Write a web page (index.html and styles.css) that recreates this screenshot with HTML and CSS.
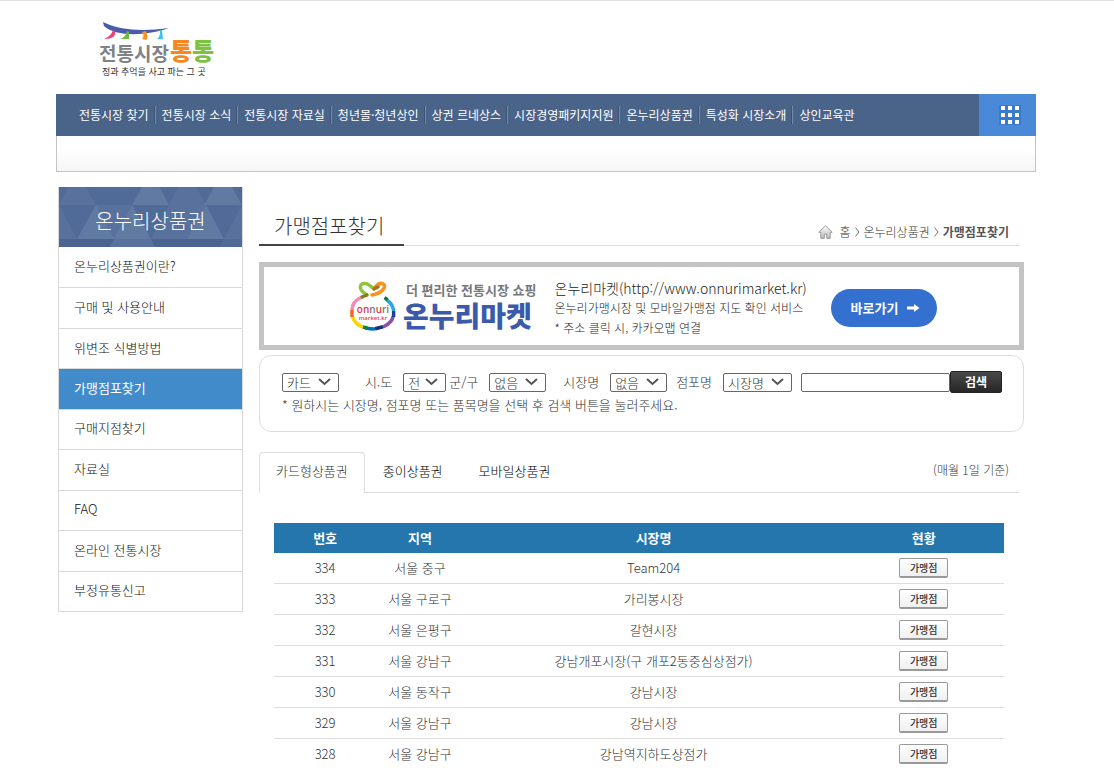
FILE: index.html
```html
<!DOCTYPE html>
<html lang="ko">
<head>
<meta charset="utf-8">
<title>가맹점포찾기 - 전통시장 통통</title>
<link rel="stylesheet" href="styles.css">
</head>
<body>
<div class="page">
  <header class="header">
    <a class="logo" href="#" aria-label="전통시장 통통">
      <svg width="124" height="62" viewBox="0 0 124 62">
        <path d="M7 2C22 10 46 12 73 8C50 16 20 17 8 6Z" fill="#4a5bab"/>
        <path d="M17 10l2 1c1 5-2 8-11 8c5-2 8-5 9-9z" fill="#ef3e7b"/>
        <path d="M31 11l2 1l0 7h-9c4-1 6-4 7-8z" fill="#6cbb45"/>
        <path d="M46 12l4-1c1 4 3 6 0 9l-4-1c2-2 2-4 0-7z" fill="#f7941e"/>
        <path d="M64 10l2 0l1 9h-6c3-2 3-5 3-9z" fill="#3ec1ee"/>
        <text class="logo-gray" x="3" y="41">전통시장</text>
        <text class="logo-big" x="74" y="40" fill="#f7881f">통</text>
        <text class="logo-big" x="96" y="40" fill="#7ec242">통</text>
        <text class="logo-tag" x="6" y="55">정과 추억을 사고 파는 그 곳</text>
      </svg>
    </a>
  </header>

  <nav class="gnb" aria-label="주 메뉴">
    <ul class="gnb-list">
      <li><a href="#">전통시장 찾기</a></li>
      <li><a href="#">전통시장 소식</a></li>
      <li><a href="#">전통시장 자료실</a></li>
      <li><a href="#">청년몰·청년상인</a></li>
      <li><a href="#">상권 르네상스</a></li>
      <li><a href="#">시장경영패키지지원</a></li>
      <li><a href="#">온누리상품권</a></li>
      <li><a href="#">특성화 시장소개</a></li>
      <li><a href="#">상인교육관</a></li>
    </ul>
    <button class="gnb-all" type="button" aria-label="전체메뉴">
      <svg width="22" height="20" viewBox="0 0 22 20">
        <rect width="22" height="20" fill="#3a7acc"/>
        <path fill="#fff" d="M2 1h4v4h-4zM9 1h4v4h-4zM16 1h4v4h-4zM2 8h4v4h-4zM9 8h4v4h-4zM16 8h4v4h-4zM2 15h4v4h-4zM9 15h4v4h-4zM16 15h4v4h-4z"/>
      </svg>
    </button>
  </nav>
  <div class="subbar"></div>

  <div class="body">
    <aside class="side">
      <h2 class="side-title">온누리상품권</h2>
      <ul class="side-list">
        <li><a href="#">온누리상품권이란?</a></li>
        <li><a href="#">구매 및 사용안내</a></li>
        <li><a href="#">위변조 식별방법</a></li>
        <li class="on"><a href="#">가맹점포찾기</a></li>
        <li><a href="#">구매지점찾기</a></li>
        <li><a href="#">자료실</a></li>
        <li><a href="#">FAQ</a></li>
        <li><a href="#">온라인 전통시장</a></li>
        <li><a href="#">부정유통신고</a></li>
      </ul>
    </aside>

    <main class="main">
      <div class="title-row">
        <h1 class="title">가맹점포찾기</h1>
        <div class="crumb">
          <svg width="15" height="14" viewBox="0 0 15 14">
            <defs><linearGradient id="roof" x1="0" y1="0" x2="0" y2="1"><stop offset="0" stop-color="#fff"/><stop offset="1" stop-color="#bbb"/></linearGradient></defs>
            <path d="M7.500 .7L.8 7.300h2V13.300h3.500V9h2.400v4.300h3.500V7.300h2z" fill="url(#roof)" stroke="#999"/>
          </svg>
          <a href="#">홈</a>
          <svg width="5" height="10" viewBox="0 0 5 10"><path d="M.5.5l3.500 4.500l-3.500 4.500" fill="none" stroke="#777"/></svg>
          <a href="#">온누리상품권</a>
          <svg width="5" height="10" viewBox="0 0 5 10"><path d="M.5.5l3.500 4.500l-3.500 4.500" fill="none" stroke="#777"/></svg>
          <strong>가맹점포찾기</strong>
        </div>
      </div>

      <section class="banner">
        <svg class="banner-mark" width="46" height="50" viewBox="0 0 46 50">
          <g fill="none" stroke-width="3.500" stroke-linecap="round">
            <path d="M17 14C8 9 9 2 15 2.500c4 0 6 4 9 5" stroke="#8cc63f"/>
            <path d="M22 14C33 12 38 4 32 2.500c-4-1-6 3-8 5" stroke="#f7941e"/>
            <path d="M24 8l4-2" stroke="#a0781a"/>
            <path d="M12 16C5 19 2 24 2 29" stroke="#f08cb8"/>
            <path d="M37 19C41 22 43 26 43.500 29" stroke="#29a8df"/>
            <path d="M2.500 36C5 42 9 45 13 46" stroke="#ffd400"/>
            <path d="M43 36C42 40 39 43 34 45.500" stroke="#8e4fa8"/>
            <path d="M16 47C20 48 22 48 24 48" stroke="#0071bc"/>
          </g>
          <g fill="none" stroke-width="3.500">
            <path d="M2 29v7" stroke="#ee6a1f"/>
            <path d="M43.600 30v6" stroke="#1d3f94"/>
            <path d="M13 46l4 1" stroke="#118043"/>
            <path d="M34.500 16.600l3 2" stroke="#14703a"/>
            <path d="M11 16.500l7-3" stroke="#8a7a20"/>
            <path d="M25 47.700l8-2" stroke="#14317d"/>
          </g>
          <text class="mark-a" x="23" y="32" text-anchor="middle"><tspan fill="#e23b4a">on</tspan><tspan fill="#777">n</tspan><tspan fill="#e23b4a">u</tspan><tspan fill="#777">ri</tspan></text>
          <text class="mark-b" x="23" y="39" text-anchor="middle">market.kr</text>
        </svg>
        <div class="banner-name">
          <span class="banner-sub">더 편리한 전통시장 쇼핑</span>
          <strong class="banner-big">온누리마켓</strong>
        </div>
        <div class="banner-text">
          <p class="lead">온누리마켓(http://www.onnurimarket.kr)</p>
          <p>온누리가맹시장 및 모바일가맹점 지도 확인 서비스</p>
          <p>* 주소 클릭 시, 카카오맵 연결</p>
        </div>
        <a class="go" href="#">바로가기
          <svg width="13" height="8" viewBox="0 0 13 8"><path d="M0 2.500h7V0l5.500 4L7 8V5.500H0z" fill="#fff"/></svg>
        </a>
      </section>

      <form class="search">
        <div class="search-row">
          <select class="w57" aria-label="상품권 종류"><option>카드</option></select>
          <label class="wide" for="sido">시.도</label>
          <select class="w43" id="sido"><option>전</option></select>
          <label class="tight" for="gugun">군/구</label>
          <select class="w57" id="gugun"><option>없음</option></select>
          <label class="mid" for="market">시장명</label>
          <select class="w57" id="market"><option>없음</option></select>
          <label class="near" for="kind">점포명</label>
          <select class="w69" id="kind"><option>시장명</option></select>
          <input class="keyword" type="text" aria-label="검색어">
          <button class="search-btn" type="button">검색</button>
        </div>
        <p class="search-help">* 원하시는 시장명, 점포명 또는 품목명을 선택 후 검색 버튼을 눌러주세요.</p>
      </form>

      <div class="tabs">
        <a class="tab active" href="#">카드형상품권</a>
        <a class="tab" href="#">종이상품권</a>
        <a class="tab" href="#">모바일상품권</a>
        <span class="tabs-note">(매월 1일 기준)</span>
      </div>

      <table class="list">
        <colgroup><col class="c-no"><col class="c-area"><col class="c-name"><col class="c-state"></colgroup>
        <thead><tr><th>번호</th><th>지역</th><th>시장명</th><th>현황</th></tr></thead>
        <tbody>
          <tr><td>334</td><td>서울 중구</td><td>Team204</td><td><button type="button">가맹점</button></td></tr>
          <tr><td>333</td><td>서울 구로구</td><td>가리봉시장</td><td><button type="button">가맹점</button></td></tr>
          <tr><td>332</td><td>서울 은평구</td><td>갈현시장</td><td><button type="button">가맹점</button></td></tr>
          <tr><td>331</td><td>서울 강남구</td><td>강남개포시장(구 개포2동중심상점가)</td><td><button type="button">가맹점</button></td></tr>
          <tr><td>330</td><td>서울 동작구</td><td>강남시장</td><td><button type="button">가맹점</button></td></tr>
          <tr><td>329</td><td>서울 강남구</td><td>강남시장</td><td><button type="button">가맹점</button></td></tr>
          <tr><td>328</td><td>서울 강남구</td><td>강남역지하도상점가</td><td><button type="button">가맹점</button></td></tr>
        </tbody>
      </table>
    </main>
  </div>
</div>
</body>
</html>
```
FILE: styles.css
```css
* { box-sizing: border-box; }
body, h1, h2, p, ul { margin: 0; padding: 0; }
ul { list-style: none; }
body, select, input, button {
  font-family: "Noto Sans CJK KR", "Noto Sans", sans-serif;
  font-size: 13px;
  font-weight: 300;
  color: #333;
}
body { background: #fff; border-top: 1px solid #e0e0e0; line-height: 20px; }
a { color: inherit; text-decoration: none; }
svg { display: block; flex: none; }

.page { padding: 0 78px 0 56px; }
.header { padding: 19px 0 12px 40px; }
.logo { display: inline-block; vertical-align: top; }
.logo-gray { font-size: 19px; font-weight: 700; fill: #808285; }
.logo-big { font-size: 24px; font-weight: 900; }
.logo-tag { font-size: 9px; font-weight: 400; fill: #333; }

.gnb { display: flex; background: #4a6388; }
.gnb-list { display: flex; flex: 1; align-items: center; padding-left: 17px; }
.gnb-list li { padding: 0 6px; line-height: 18px; font-size: 12px; font-weight: 400; color: #fff; white-space: nowrap; }
.gnb-list li + li { border-left: 1px solid #7189ab; box-shadow: -1px 0 #3c5272; }
.gnb-all { display: flex; align-items: center; justify-content: center; width: 57px; height: 42px; padding: 0 0 0 5px; border: 0; background: #4a89d8; }
.subbar { height: 36px; border: 1px solid #c4c4c4; border-top: 0; background: linear-gradient(#fff 35%, #f6f6f6); }

.body { display: flex; align-items: flex-start; gap: 16px; padding: 15px 12px 0 2px; }
.side { flex: none; width: 185px; border: 1px solid #d9d9d9; border-top: 0; }
.side-title {
  line-height: 60px; padding-top: 4px; height: 60px; text-align: center; font-size: 20px; font-weight: 300; color: #fff;
  background: #506b98 url("data:image/svg+xml,%3Csvg xmlns='http://www.w3.org/2000/svg' width='183' height='60'%3E%3Cg fill='%23fff'%3E%3Cpath opacity='.1' d='M18 52L37 18L55 52zM73 18L92 52L55 52zM128 52L147 18L165 52zM73 18L92 -16L110 18zM145 18L164 -16L183 18z'/%3E%3Cpath opacity='.05' d='M37 18L73 18L55 52zM92 52L110 18L128 52zM110 18L147 18L128 52zM0 18L18 -16L37 18zM0 18L18 52L0 52zM110 18L128 -16L147 18zM165 52L183 18L183 52zM55 52L92 52L110 86L37 86z'/%3E%3C/g%3E%3Cpath opacity='.06' d='M0 52L55 52L37 86L0 86zM92 52L165 52L147 86L110 86z'/%3E%3C/svg%3E");
}
.side-list { display: grid; grid-auto-rows: 1fr; min-height: 364px; }
.side-list li { display: flex; align-items: center; padding: 0 0 2px 15px; color: #111; }
.side-list li + li { border-top: 1px solid #d9d9d9; }
.side-list .on { background: #428bca; color: #fff; font-weight: 400; }

.main { flex: 1; min-width: 0; }
.title-row { display: flex; justify-content: space-between; align-items: flex-end; margin-right: 5px; border-bottom: 1px solid #ddd; }
.title { padding: 24px 20px 3px 15px; margin-bottom: -1px; border-bottom: 2px solid #444; line-height: 30px; font-size: 20px; font-weight: 300; }
.crumb { display: flex; align-items: center; gap: 4px; padding: 0 10px 3px 0; font-size: 12px; }
.crumb svg:first-child { margin-right: 2px; }
.crumb strong { font-weight: 700; color: #555; }

.banner { display: flex; align-items: center; margin-top: 16px; height: 88px; padding-left: 86px; border: 5px solid #c4c4c4; color: #222; white-space: nowrap; }
.mark-a { font-family: "Open Sans", sans-serif; font-size: 10px; font-weight: 600; }
.mark-b { font-family: "Open Sans", sans-serif; font-size: 6px; font-weight: 600; fill: #e23b4a; }
.banner-name { display: flex; flex-direction: column; margin-left: 7px; }
.banner-sub { padding-left: 3px; font-size: 13px; line-height: 18px; font-weight: 700; color: #77787b; }
.banner-big { font-size: 28px; line-height: 32px; font-weight: 900; color: #3c5aab; }
.banner-text { margin-left: 18px; padding-top: 4px; font-size: 12px; }
.banner-text .lead { font-size: 14px; }
.go { display: flex; align-items: center; gap: 9px; margin: 3px 0 0 24px; height: 38px; padding: 0 17px 0 20px; border-radius: 19px; background: #3370cf; color: #fff; font-weight: 700; }

.search { margin-top: 5px; padding: 14px 21px 16px 22px; border: 1px solid #ddd; border-radius: 12px; }
.search-row { display: flex; align-items: center; height: 24px; white-space: nowrap; }
.search select {
  appearance: none; height: 19px; padding: 0 0 0 4px; border: 1px solid #666; border-radius: 2px; line-height: 17px;
  background: #fff url("data:image/svg+xml,%3Csvg xmlns='http://www.w3.org/2000/svg' width='13' height='8'%3E%3Cpath d='M1 1l5.500 5l5.500-5' fill='none' stroke='%23555' stroke-width='2'/%3E%3C/svg%3E") no-repeat right 7px center;
}
.w43 { width: 43px; }
.w57 { width: 57px; }
.w69 { width: 69px; }
.search label { margin-right: 11px; }
.search .wide { margin-left: 26px; }
.search .tight { margin-left: 3px; }
.search .mid { margin-left: 17px; }
.search .near { margin-left: 9px; }
.keyword { flex: 1; min-width: 0; height: 19px; margin-left: 9px; border: 1px solid #666; border-radius: 2px; }
.search-btn { width: 52px; height: 22px; padding: 0; border: 1px solid #222; border-radius: 2px; background: linear-gradient(#484848, #272727); color: #fff; font-size: 12px; line-height: 18px; font-weight: 700; }
.search-help { margin-top: 1px; }

.tabs { display: flex; align-items: stretch; margin: 20px 5px 0 0; height: 41px; border-bottom: 1px solid #ddd; line-height: 36px; color: #000; }
.tab { padding: 0 17px; border: 1px solid transparent; }
.tab.active { margin-bottom: -1px; padding: 0 16px; border-color: #ddd; border-bottom: 0; border-radius: 4px 4px 0 0; background: #fff; color: #333; }
.tabs-note { margin-left: auto; padding-right: 10px; font-size: 12px; color: #333; }

.list { width: calc(100% - 35px); margin: 30px 20px 0 15px; border-collapse: separate; border-spacing: 0; table-layout: fixed; text-align: center; }
.c-no { width: 14%; }
.c-area { width: 12%; }
.c-name { width: 52%; }
.c-state { width: 22%; }
.list th { height: 30px; padding: 0; background: #2576ac; color: #fff; font-weight: 700; }
.list td { height: 31px; padding: 0; border-bottom: 1px solid #ddd; }
.list button { display: block; width: 49px; height: 20px; margin: 0 auto; padding: 0; border: 1px solid #999; border-bottom-width: 2px; border-radius: 2px; background: linear-gradient(#fff, #f0f0f0); font-size: 10px; line-height: 16px; font-weight: 500; }
```
